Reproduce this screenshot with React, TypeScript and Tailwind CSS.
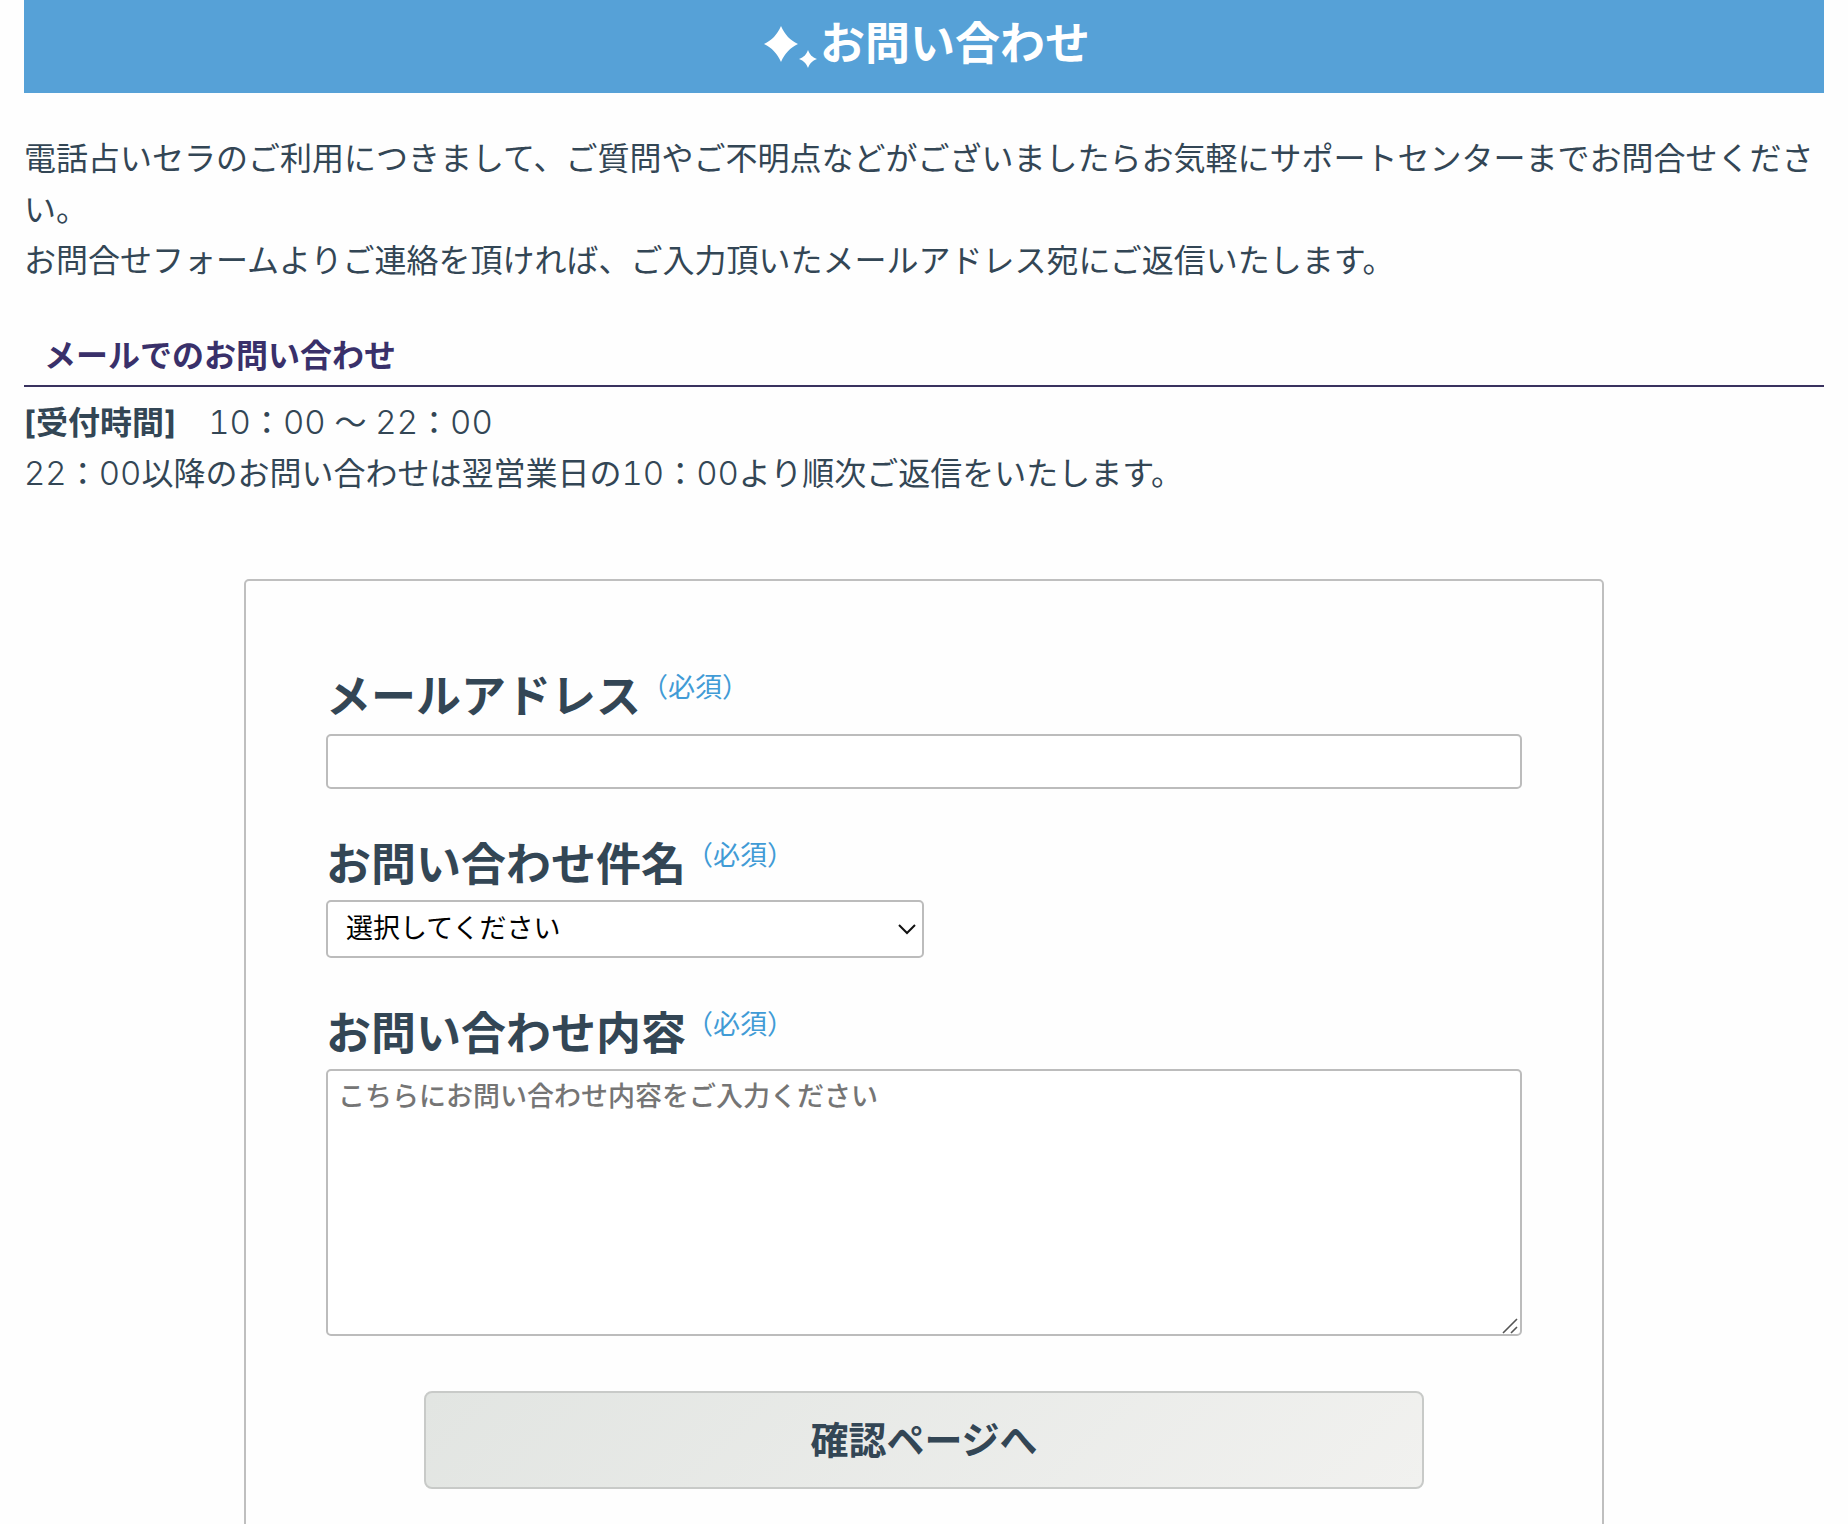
import type { ReactNode } from "react";

function Sparkles() {
  return (
    <svg viewBox="0 0 62 48" className="h-12 w-[62px] shrink-0" fill="#fff" aria-hidden="true">
      <path d="M23 6C27 15 32 20 40 24C32 28 27 33 23 42C19 33 14 28 6 24C14 20 19 15 23 6Z" />
      <path d="M50 30C52 35 54 37 59 39C54 41 52 43 50 48C48 43 46 41 41 39C46 37 48 35 50 30Z" />
    </svg>
  );
}

function FieldLabel({ htmlFor, children }: { htmlFor: string; children: ReactNode }) {
  return (
    <label htmlFor={htmlFor} className="flex items-start text-[45px] leading-[71px] font-bold">
      {children}
      <span className="text-[27px] leading-[54px] font-normal text-[#419bd6]">（必須）</span>
    </label>
  );
}

function Num({ children }: { children: ReactNode }) {
  return <span className="text-[33px] leading-none font-light tabular-nums">{children}</span>;
}

export default function App() {
  return (
    <main
      lang="ja"
      className="min-h-screen bg-[#fefefe] px-6 font-[Inter,'Noto_Sans_CJK_JP',sans-serif] text-[32px] leading-[51px] text-[#334655]"
    >
      <h1 className="flex items-center justify-center bg-[#56a1d7] pt-2 pb-[13px] text-[45px] leading-[72px] font-bold text-white">
        <Sparkles />
        お問い合わせ
      </h1>

      <p className="pt-10">
        電話占いセラのご利用につきまして、ご質問やご不明点などがございましたらお気軽にサポートセンターまでお問合せください。
        <br />
        お問合せフォームよりご連絡を頂ければ、ご入力頂いたメールアドレス宛にご返信いたします。
      </p>

      <h2 className="mt-9 border-b-2 border-[#39325f] px-5 pt-2 pb-1 font-bold text-[#39306a]">
        メールでのお問い合わせ
      </h2>
      <p className="mt-2.5">
        <strong>[受付時間]</strong>　<Num>10</Num>：<Num>00 </Num>～<Num> 22</Num>：<Num>00</Num>
        <br />
        <Num>22</Num>：<Num>00</Num>以降のお問い合わせは翌営業日の<Num>10</Num>：<Num>00</Num>
        より順次ご返信をいたします。
      </p>

      <form className="mx-auto mt-20 max-w-[1360px] rounded-[5px] border-2 border-[#bfbfbf] px-20 pt-20 pb-20">
        <FieldLabel htmlFor="email">メールアドレス</FieldLabel>
        <input
          id="email"
          type="email"
          required
          className="mt-0.5 block h-[55px] w-full rounded-[5px] border-2 border-[#bcbcbc] bg-white px-3 text-[27px]"
        />

        <div className="mt-10">
          <FieldLabel htmlFor="subject">お問い合わせ件名</FieldLabel>
          <div className="relative w-1/2">
            <select
              id="subject"
              required
              className="block h-[58px] w-full appearance-none rounded-[5px] border-2 border-[#bcbcbc] bg-white px-[18px] pb-0.5 text-[27px] leading-[43px] text-black"
            >
              <option>選択してください</option>
            </select>
            <svg
              viewBox="0 0 20 12"
              className="pointer-events-none absolute top-[23px] right-[7px] h-3 w-5"
              fill="none"
              stroke="#111"
              strokeWidth="2"
              aria-hidden="true"
            >
              <path d="M2 2L10 10L18 2" />
            </svg>
          </div>
        </div>

        <div className="mt-10">
          <FieldLabel htmlFor="message">お問い合わせ内容</FieldLabel>
          <div className="relative">
            <textarea
              id="message"
              required
              placeholder="こちらにお問い合わせ内容をご入力ください"
              className="block h-[267px] w-full resize-none rounded-[5px] border-2 border-[#bcbcbc] bg-white px-2.5 py-1 text-[27px] leading-[43px] font-medium placeholder:text-[#757575]"
            />
            <svg
              viewBox="0 0 16 16"
              className="pointer-events-none absolute right-1 bottom-0.5 size-4"
              fill="none"
              stroke="#555"
              strokeWidth="1.6"
              aria-hidden="true"
            >
              <path d="M1 15L15 1M9 15L15 9" />
            </svg>
          </div>
        </div>

        <button
          type="submit"
          className="mx-auto mt-[55px] block h-[98px] w-full max-w-[1000px] rounded-lg border-2 border-[#c8cac8] bg-linear-135 from-[#e2e5e2] to-[#f1f1ef] text-[38px] font-bold"
        >
          確認ページへ
        </button>
      </form>
    </main>
  );
}
